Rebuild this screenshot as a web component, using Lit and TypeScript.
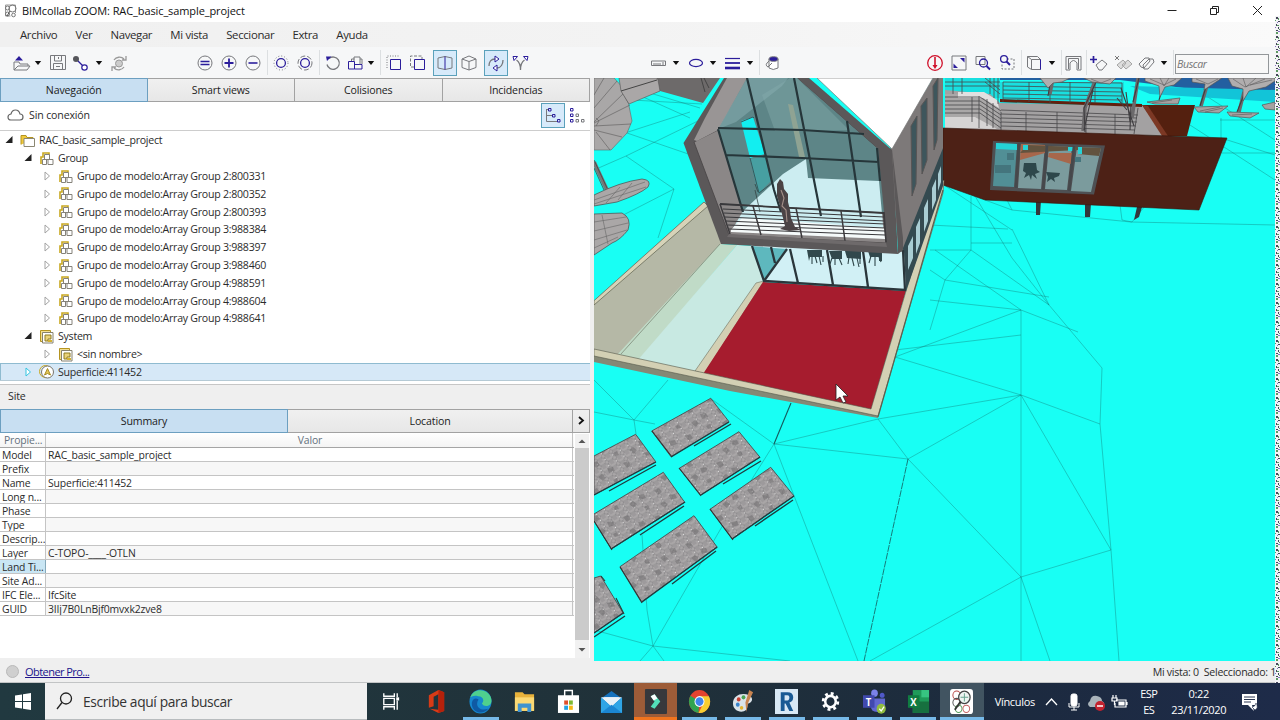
import { css, html, LitElement, svg } from 'lit'
import { customElement } from 'lit/decorators.js'
import { classMap } from 'lit/directives/class-map.js'

const G = '#77787c'
const B = '#2b1d9b'

// 24x24 toolbar glyphs
const icons: Record<string, unknown> = {
	open: svg`<path d="M5 19V11h5l1 2h8v2M5 19l4-4h12l-3 4z" stroke=${G}/><path d="M10 5l4 4.500H6z" fill=${B} />`,
	save: svg`<path d="M4.500 4.500h15v14h-15zM8.500 5v5h7V5M12.500 6v2M7.500 18v-5.500h9V18M10 15.500h4" stroke=${G}/>`,
	link: svg`<path d="M6 8l8 8" stroke=${B} stroke-width="1.2"/><circle cx="6" cy="8" r="3" fill="#55565b"/><circle cx="14.500" cy="16.500" r="2.700" fill="#fff" stroke=${B} stroke-width="1.200"/>`,
	refresh: svg`<circle cx="12" cy="12.500" r="3.500" fill="#ccc" stroke="#999"/><path d="M7 9c2-3 7-4 10-1M19 5v4h-4M17 16c-2 3-7 4-10 1M5 20v-4h4" stroke="#999" stroke-width="1.3"/>`,
	equal: svg`<circle cx="12" cy="12" r="7" stroke=${G}/><path d="M7.500 10.500h9M7.500 13.500h9" stroke=${B} stroke-width="1.600"/>`,
	plus: svg`<circle cx="12" cy="12" r="7" stroke=${G}/><path d="M7.500 12h9M12 7.500v9" stroke=${B} stroke-width="1.800"/>`,
	minus: svg`<circle cx="12" cy="12" r="7" stroke=${G}/><path d="M7.500 12h9" stroke=${B} stroke-width="1.600"/>`,
	dotted: svg`<circle cx="12" cy="12" r="7" stroke=${G} stroke-dasharray="1 2"/><circle cx="12" cy="12" r="4.400" stroke=${B} stroke-width="1.300"/>`,
	dashed: svg`<circle cx="12" cy="12" r="7" stroke=${G} stroke-dasharray="5 2"/><circle cx="12" cy="12" r="4.400" stroke=${B} stroke-width="1.300"/>`,
	undo: svg`<path d="M8 7.500a6.200 6.200 0 1 1-2 6" stroke=${G} stroke-width="1.300"/><path d="M5 5.500h5.500L6 10z" fill=${B} />`,
	cubes: svg`<path d="M5 10.500h6v7.500H5zM11 13.500h7.500V18H11" stroke=${B}/><path d="M8 10V8h3M10.500 6h6v7.500M10.500 6v4M16.500 8h2v5" stroke=${G}/>`,
	boxDots: svg`<path d="M5 17V5h13" stroke=${G} stroke-dasharray="1 1.500"/><path d="M8.500 8.500h10v10h-10z" stroke=${B}/>`,
	boxDash: svg`<path d="M8 16H4.500V5H16v3" stroke=${G} stroke-dasharray="3 1.500"/><path d="M8.500 8.500h10v10h-10z" stroke=${B}/>`,
	split: svg`<path d="M5 7l7-1.500L19 7v10l-7 1.500L5 17z" stroke=${G}/><path d="M12 5.500v13" stroke=${B}/>`,
	cube: svg`<path d="M12 5l7 3v8.500l-7 2.500-7-2.500V8zM5 8l7 2.500L19 8M12 10.500V19" stroke=${G}/>`,
	orbit: svg`<path d="M5 15c0-4 2-7 6-7M19 9c0 4-2 8-6 8" stroke=${G} stroke-width="1.3"/><path d="M11 5l4 3-4 3zM13 14l-4 3 4 3z" fill="#fff" stroke=${B}/>`,
	fork: svg`<path d="M12.500 19c0-5-1-8-4-10M12.500 19c0-5 1-8 4-10" stroke=${G} stroke-width="1.300"/><path d="M5 5.500h4.500L6 9.500zM20 5.500h-4.500l3.500 4z" fill="#fff" stroke=${B}/>`,
	ruler: svg`<path d="M4.500 10h14v4.500h-14zM7 14v-2M9 14v-2M11 14v-2M13 14v-2M16 14v-3" stroke=${G}/>`,
	ellipse: svg`<ellipse cx="12" cy="12" rx="6.500" ry="3.600" stroke=${B} stroke-width="1.200"/>`,
	lines: svg`<path d="M4 7.500h15" stroke=${B} stroke-width="1.200"/><path d="M4 12h15" stroke=${B} stroke-width="1.800"/><path d="M4 17h15" stroke=${B} stroke-width="2.600"/>`,
	bucket: svg`<path d="M8 8v9q4 3 9 0V8" stroke=${G} fill="#fff"/><ellipse cx="12.500" cy="8" rx="4.500" ry="2.300" fill=${B} stroke=${G}/><path d="M8 10q-5 4-1 6l4-4" stroke=${G}/>`,
	down: svg`<circle cx="12" cy="12" r="7.300" stroke="#d0112b" stroke-width="1.300"/><path d="M12 6v10" stroke="#d0112b" stroke-width="1.600"/><path d="M9.500 14h5L12 18z" fill="#d0112b"/>`,
	fit: svg`<path d="M5 5h14v14H5z" stroke=${G}/><path d="M13 7h4.500v4.500zM6.500 12.500V17H11z" fill=${B}/>`,
	zoom: svg`<path d="M5 5.500h9v8H5z" stroke=${G}/><circle cx="12.500" cy="12" r="4" stroke=${B} stroke-width="1.300"/><path d="M15.500 15l3.500 3.500" stroke=${B} stroke-width="1.900"/>`,
	zoomBox: svg`<path d="M12 8h7v10H7v-6" stroke=${G} stroke-dasharray="2 1.500"/><circle cx="9" cy="8" r="3.400" stroke=${B} stroke-width="1.300"/><path d="M11.500 10.500L15 14" stroke=${B} stroke-width="1.900"/>`,
	solid: svg`<path d="M8.500 8.500h9v10h-9zM4.500 5.500h10l3 3M4.500 5.500v10.500l4 2.500M4.500 5.500l4 3" stroke=${G}/><path d="M17.500 8.500v10" stroke=${B}/>`,
	gate: svg`<path d="M4.500 19V5.500h15V19h-4v-7q-3.500-5-7 0v7zM7 18V7.500h10V18" stroke=${G}/>`,
	addPlane: svg`<path d="M9 14l6-5 5 4-5 6h-3z" stroke=${G}/><path d="M6.500 5v7M3 8.500h7" stroke=${B} stroke-width="1.700"/>`,
	delPlane: svg`<path d="M6 14l6-5 3 3-5 6zM11 14l6-5 4 4-6 5z" stroke="#a5a5a5" fill="#ddd"/><path d="M4 5l4 4M8 5l-4 4" stroke="#777"/>`,
	planes: svg`<path d="M4 13l6-6h4l1 3-6 7-3-1zM8 14l6-6h4l1 3-6 7H9z" stroke=${G}/>`,
}

const tools = [
	'open caret save link caret refresh',
	'equal plus minus | dotted dashed | undo cubes~ caret | boxDots boxDash split* cube orbit* fork',
	'ruler caret ellipse caret lines caret | bucket',
	'down fit zoom zoomBox | solid caret | gate~ | addPlane delPlane planes caret |',
].map((g) => g.split(' '))

const menus = ['Archivo', 'Ver', 'Navegar', 'Mi vista', 'Seccionar', 'Extra', 'Ayuda']

const groups = ['2:800331', '2:800352', '2:800393', '3:988384', '3:988397', '3:988460', '4:988591', '4:988604', '4:988641']

const tree = [
	{ level: 0, icon: 'folder', label: 'RAC_basic_sample_project', open: true },
	{ level: 1, icon: 'group', label: 'Group', open: true },
	...groups.map((g) => ({ level: 2, icon: 'group', label: `Grupo de modelo:Array Group ${g}`, open: false })),
	{ level: 1, icon: 'system', label: 'System', open: true },
	{ level: 2, icon: 'system', label: '<sin nombre>', open: false },
	{ level: 1, icon: 'site', label: 'Superficie:411452', open: false, selected: true },
] as { level: number; icon: string; label: string; open: boolean; selected?: boolean }[]

const treeIcons: Record<string, unknown> = {
	folder: svg`<path d="M1 11.500V2.500h5l1 2h6v3" fill="#efc93c" stroke="#b59420"/><path d="M4 5.500h10.500v8H4z" fill="#fff" stroke="#8b8773"/>`,
	group: svg`<path d="M2 13V6h2V2h6v3" stroke="#c9a820" stroke-width="1.600"/><path d="M5.500 3.500h5v5h-5zM3.500 8.500h4v5h-4zM9 8.500h5v5H9z" fill="#fff" stroke="#85827a"/>`,
	system: svg`<path d="M1.500 1.500h10v11h-10z" fill="#f3df92" stroke="#b59420"/><path d="M3.500 3.500h10.500v10.500H3.500z" fill="#fff" stroke="#85816f"/><path d="M6 6h6v4H9v2H6z" fill="#e9d27a" stroke="#8f7a20"/><path d="M9 11h4v2H9z" fill="#d3b233"/>`,
	site: svg`<circle cx="6.500" cy="7.500" r="6" stroke="#c9a820"/><circle cx="8.500" cy="8" r="6" fill="#fff" stroke="#77746c"/><path d="M5.500 11l3-6.500 3 6.500-3-1.500z" fill="#e4c75a" stroke="#a78c24"/>`,
}

const properties = [
	['Model', 'RAC_basic_sample_project'],
	['Prefix', ''],
	['Name', 'Superficie:411452'],
	['Long n...', ''],
	['Phase', ''],
	['Type', ''],
	['Descrip...', ''],
	['Layer', 'C-TOPO-____-OTLN'],
	['Land Ti...', ''],
	['Site Ad...', ''],
	['IFC Ele...', 'IfcSite'],
	['GUID', '3IIj7B0LnBjf0mvxk2zve8'],
]

const pavers = [
	'710.7,398.3 729,421.7 671,456.7 651.7,431',
	'739,431.7 760,457.3 700.7,495 679.3,468.3',
	'770.7,467.3 794,496 732.3,539 710,509.3',
	'635.7,434.3 655.7,461.7 594,495 594,456',
	'663.3,472.3 684.7,502.3 611.3,549 594,521 594,514',
	'694,515.7 717.3,547.3 641.7,601.7 620,566.7',
	'600.7,576 623.3,613.3 594,633 594,578',
]

@customElement('model-view')
export class ModelView extends LitElement {
	static styles = css`
		:host {
			display: block;
			overflow: hidden;
		}

		svg {
			display: block;
			width: 100%;
			height: 100%;
		}
	`

	terrain() {
		return svg`
			<g stroke="#146a68" stroke-opacity=".6" stroke-width=".6" fill="none">
				<path d="M625 133L690 112M627 133L700 158M594 170L626 156L674 189L594 230M674 189L658 238M626 156L700 120M632 100L702 104M632 92L690 118M650 93L700 108"/>
				<path d="M594 380L634 420L668 380M594 412L634 420L636 434M710 398L774 444M634 420L655 424M642 535L647 610L653 646M653 646L594 630M653 646L640 661M653 646L664 661M653 646L790 661M653 646L720 530L774 444"/>
				<path d="M774 444L878 419L1021 395L1100 424L1111 550L1119 661M774 444L908 459L1021 395M878 419L908 459L1021 577L1111 550L1021 395M774 444L858 661M1021 395V661M1021 577L870 661M1021 577L1050 661M1021 310V395L895 357L1021 310"/>
				<path d="M944 180L975 196L1012 258L1049 305L1102 368L1100 424M1012 229L1049 305M1021 310L1078 332M895 350L1021 335M935 250L1021 310M930 300L1021 310M930 225L1008 229M944 185L1012 230M971 196V250H930M971 243H1012M930 270L945 280L971 250L1049 305M945 280L1049 297M945 280L930 330"/>
				<path d="M985 200L1012 210L1131 222L1275 225M1012 210L1005 196M1120 205L1122 220L1132 222L1145 206M1221 118V138L1275 155M1190 125L1275 180M1200 92L1275 140M1220 120H1275M1222 153H1275"/>
			</g>
			<path d="M791 403L774 444" stroke="#145a5c" stroke-width="1.100" fill="none"/>
			<path d="M908 459L864 661" stroke="#145a5c" stroke-width=".8" stroke-dasharray="7 1" fill="none"/>`
	}

	trees() {
		return svg`
			<path d="M594 78H614L626 91L632 121L627 133L611 150H594z" fill="#a9a7a7" stroke="#666" stroke-width=".6"/>
			<path d="M594 108L617 81M594 122L625 92M594 123L630 105M594 126L631 124M594 130L622 137M596 132L610 150M594 95L604 78M596 118l3 3-3 5" stroke="#5c5a5a" stroke-width=".6" fill="none"/>
			<path d="M594 162l13 28" stroke="#777" stroke-width="4"/>
			<path d="M594 160l13 28M594 168l10 22" stroke="#444" stroke-width=".8"/>
			<path d="M594 195Q620 182 642 179Q652 180 648 187Q640 194 617 202L594 206zM594 214L622 213Q632 218 628 230Q620 240 612 243L594 255z" fill="#aaa7a7" stroke="#4c4a4a" stroke-width=".7"/>
			<path d="M594 200L645 182M594 204L646 187M606 203L620 187M618 200L632 183M594 222L626 217M594 231L628 223M594 240L627 230M594 248L618 237M602 215L608 244" stroke="#666" stroke-width=".6"/>`
	}

	annex() {
		return svg`
			<path d="M945 78H1275V94L1200 90L1120 80H945z" fill="#235fa0"/>
			<path d="M1130 86L1275 90V102L1150 94z" fill="#12c4d8"/>
			<path d="M945 78H1000V82H1124V104H1000V98H945z" fill="#19dfe0"/>
			<path d="M945 90L990 94L1000 103L1143 106L1165 136L945 130z" fill="#a3a1a2"/>
			<path d="M945 94L985 94L998 103V128L945 128z" fill="#aaa8a8"/>
			<path d="M945 117H975L997 129L945 128z" fill="#d6d4d4"/>
			<path d="M958 92h26l13 8 2 8-16-10h-25z" fill="#e2e0e0"/>
			<path d="M1142 105L1195 105L1187 136L1165 136z" fill="#54200f"/>
			<path d="M1142 105L1148 106L1168 136L1162 136z" fill="#7c3824"/>
			<path d="M1000 99L1142 104V107L1000 102z" fill="#62200f"/>
			<g stroke="#474649" stroke-width=".8" fill="none">
				<path d="M1003 82L1122 83M1003 86L1122 88M1003 90L1122 92M1003 94L1122 96M1003 98L1122 100M1003 82V102M1029 82V102M1050 82V103M1070 82V103M1095 82V103M1122 83V104"/>
				<path d="M1001 110L1138 115M1001 114L1137 118M1001 118L1137 122M1001 122L1136 126M1001 126L1135 130M1001 112V130M1026 112V131M1057 112V132M1086 113V133M1115 114V134M1138 108L1134 134"/>
				<path d="M945 97H980L1001 111M945 101H980L1001 115M945 105H980L1001 119M945 109H980L1001 123M945 113H980L1001 128M979 96V128M972 97V122M987 99V126M993 103V128M962 78V94M953 78V94M998 78V104M945 82H1000M945 86H1000M985 78l15 12M985 82l15 12M990 78v16M994 78v20"/>
			</g>
			<g stroke="#6b696b" fill="none" stroke-width="3.500">
				<path d="M1053 78L1050 94M1096 78L1085 108L1083 131M1138 78L1132 118M1208 82L1201 106M1244 92L1239 112"/>
			</g>
			<path d="M1051 78l-3 18M1096 82l-12 26 1 24M1093 90l-9 40M1139 78l-6 24M1121 88l13 38M1126 92l4 30M1117 98l10 12M1131 104l-1 26M1207 84l-7 22M1245 92l-8 20M1164 84l-5 16" stroke="#3f3d40" stroke-width="1.100" fill="none"/>
			<path d="M1040 78h30l-8 4-9 1-5 5zM1084 78h32l-6 6-18-2zM1145 78h37l-8 7-9 2-5 10-1-11-14-5zM1192 78h30l-12 8-6 4 1-6-13-2zM1228 78h47v3l-9 6-17 4-6 10 0-12-11-3z" fill="#b0adae" stroke="#555" stroke-width=".7"/>
			<path d="M1150 79l14 6 12-6M1160 78l4 8 5-8M1196 79l12 5 10-5M1233 79l12 8 20-8M1243 78l3 9 10-9M1250 85l22-5M1091 79l10 4 10-4" stroke="#5c5a5c" stroke-width=".6" fill="none"/>
			<path d="M1147 102L1180 98L1178 104L1155 104zM1194 107L1228 106L1219 113L1198 112zM1227 112L1259 113L1250 118L1230 116zM1262 105L1275 102V110L1265 109z" fill="#a5a2a2" stroke="#555" stroke-width=".7"/>
			<path d="M1152 103l20-3M1200 111l20-4M1205 112l18-4M1232 115l20-1" stroke="#555" stroke-width=".6"/>
			<path d="M1036 200h5l-1 15h-4zM1085 203h6l-1 14h-5zM1137 207h5l-3 10-5 3z" fill="#33383b"/>
			<path d="M943 128L1227 138L1199 210L985 200L943 185z" fill="#4d2116" stroke="#35150e" stroke-width=".6"/>
			<path d="M993 141L1105 145.500L1094 194.500L990 190z" fill="#4e5053"/>
			<path d="M996 143L1017 144L1014 187L993 186z" fill="#518f96"/>
			<path d="M996 143L1017 144V150L996 149z" fill="#25d3d6"/>
			<path d="M1021 144L1045 145L1041 189L1018 188zM1049 146L1072 147L1067 190L1045 189zM1077 147L1101 148L1091 192L1071 191z" fill="#7b9b9d"/>
			<path d="M1021 144L1045 145V153L1020 160zM1049 153L1072 153L1071 164L1048 157z" fill="#a7674b"/>
			<path d="M1027 145L1101 148L1099 156L1078 154V150L1020 153z" fill="#62533f"/>
			<path d="M1023 145h5v5h-5zM1068 147h5v4h-5zM1078 147h4v7h-4z" fill="#25d3d6"/>
			<path d="M1007 153h7v7h-7zM995 165h16v8h-16zM1075 157h6v5h-6z" fill="#44757d"/>
			<path d="M1024 163h12l1 7 3 2-5 2 2 5-5-4-1 5-2-5-5 3 2-5-3-2zM1046 172l14 1-1 3-5 2 1 4-4-3-4 3 1-5z" fill="#2e474b"/>
			<path d="M1047 145.500L1043 190M1019 143L1016 188M1074 146L1069 191" stroke="#46484b" stroke-width="2.600"/>`
	}

	yard() {
		return svg`
			<path d="M594 300.700L704 202L712 206L722 244L622 358L594 352z" fill="#b5b8a6"/>
			<path d="M594 300.700L704 202L708 206L594 305z" fill="#d6d3b8" stroke="#5c604f" stroke-width=".7"/>
			<path d="M720 244L737 245L639 361L616 356z" fill="#c0dbc7"/>
			<path d="M737 245L752 246L763 281L698 374L637 361z" fill="#c8e9e2"/>
			<path d="M720 244L621 354" stroke="#75806f" stroke-width=".7"/>
			<path d="M756 283L764 281L704 374L695 371z" fill="#d3d0b4" stroke="#6f705f" stroke-width=".6"/>
			<path d="M763 282L906 291L871 411L703 374z" fill="#a61c2e"/>
			<path d="M594 355L878 414V418L730 391L594 362z" fill="#858875"/>
			<path d="M594 349L871 409L906 291L940 184L944 180L943 193L878 416L594 356z" fill="#d3d0b4" stroke="#54584a" stroke-width=".6"/>
			<path d="M943 190L878 417" stroke="#5d604f" stroke-width="1.200"/>`
	}

	house() {
		return svg`
			<path d="M620 78H720L703 103L660 91L628 103L621 91z" fill="#6d6a6a"/>
			<path d="M619 78H657L658 80L660 91L629 104L621 91z" fill="#aaa7a7" stroke="#555" stroke-width=".6"/>
			<path d="M621 91L657 80M701 78l4 14M704 78l5 10" stroke="#444"/>
			<path d="M890 149L933 78H943V183L905 291L898 246z" fill="#7d7979"/>
			<path d="M903 248L943 148V186L906 291z" fill="#344a50"/>
			<path d="M908 246l5-10v22l-5 12zM916 227l4-9v25l-4 11zM924 208l4-9v22l-4 11zM932 188l4-9v21l-4 10zM938 174l3-8v16l-3 9z" fill="#a9cdd3"/>
			<path d="M911 126L917 116L916 184L912 196zM921 106L927 98V160L922 174zM933 86L938 78L937 140L934 150z" fill="#3e565c" stroke="#585555"/>
			<path d="M751 245L904 252L906 290L763 281z" fill="#d1f0f5"/>
			<path d="M752 246L786 249L763 281z" fill="#5eb8be"/>
			<path d="M752 246L764 281L905 290L903 250M764 281L787 249M771 247L775 263M790 249L798 283M827 250L833 285M863 251L868 287" fill="none" stroke="#2a363b" stroke-width="2.300"/>
			<path d="M807 250h15v7h-12l-1 4zM829 251h13v8h-10zM845 251h16v8l-14-1zM868 251h14v10h-3v-4h-9z" fill="#31484c"/>
			<path d="M812 256v8M815 256l2 7M819 256l2 9M823 256v6M832 258l-2 6M835 258v7M839 258l3 7M849 257l-1 7M852 258l2 8M857 258l2 9M860 256v8M871 256l-2 7M875 257v9M879 257l2 5" stroke="#31484c" stroke-width="1.100"/>
			<path d="M724 78H809L892 150L898 254L721 244L683.500 143z" fill="#5b5859"/>
			<path d="M892 149L898 246L898 254L903 250V238z" fill="#5b5859"/>
			<path d="M817 78H933L892 149z" fill="#fff" stroke="#777" stroke-width=".7"/>
			<path d="M741 78H797L877 148L886 243L729 235L694 142L718 130z" fill="#8b8787" stroke="#464344" stroke-width=".8"/>
			<path d="M727 78H747L718 130L697 141L694 140L705 118z" fill="#999595"/>
			<path d="M747 78H797L878 149L884 212L743 211L718 130z" fill="#5d8587"/>
			<path d="M762 95L790 78H797L849 130L775 131z" fill="#769c9e" opacity=".7"/>
			<path d="M747 78H788L782 86L736 122L718 129z" fill="#83aaad" opacity=".6"/>
			<path d="M741 121L753 117L765 154L750 158z" fill="#12eef0"/>
			<path d="M750 159L765 156L771 181L758 194z" fill="#479fa1"/>
			<path d="M741 122l12-5 1 1M750 158l9 35 13-10" stroke="#35595d" fill="none"/>
			<path d="M788 104l5 1 12 52h-6z" fill="#8fa393"/>
			<path d="M806 159L808 178L879 181L884 236L732 230L743 211L783 174z" fill="#ccedf1"/>
			<path d="M731 230L742 218L884 228L885 239L731 232z" fill="#f5fafa"/>
			<path d="M747 78L774 190L781 212M794 78L821 216M847 121L861 217M718 129L743 212M718 128L802 130L864 134M726 155L802 158L879 162M877 148L880 181" fill="none" stroke="#26363a" stroke-width="2.200"/>
			<path d="M720 204L884 213M723 209L884 217M724 213L885 221M725 217L885 224M726 221L885 228M728 225L885 231M729 229L885 235" fill="none" stroke="#38383b" stroke-width="1"/>
			<path d="M720 204L884 213" stroke="#38383b" stroke-width="1.800"/>
			<path d="M753 206L761 235M796 208L802 238M841 211L845 241M720 204L730 234M884 212L886 242" stroke="#3c3a3d" stroke-width="1.500"/>
			<path d="M777 184l3-5 3 3 1 7 4 5v8l2 8 1 8 4 9 6 3-12 1-9-2 5-3-5-20-3-10z" fill="#4b4345"/>
			<path d="M781 190l3 8-2 8 4 4 1 12" stroke="#a38f88" fill="none" stroke-width="1.100"/>
			<path d="M729 234L886 243L887 247L727 237z" fill="#6e6a6b"/>
			<path d="M755 190l5 22M755 184l3 8" stroke="#344" stroke-width=".8"/>`
	}

	render() {
		return html`
			<svg viewBox="594 78 681 583" preserveAspectRatio="none" fill="none">
				<defs>
					<pattern id="stone" width="9" height="7" patternUnits="userSpaceOnUse" patternTransform="rotate(-32)">
						<rect width="9" height="7" fill="#a9a6a7" />
						<rect x="2" y="1" width="4" height="3" fill="#9d9a9c" />
						<path d="M0 2l2-2h4l3 2v2L6 7H2L0 4z" stroke="#7c7a7d" stroke-width=".6" />
						<path d="M8 3h1v1H8z" fill="#e2e2e2" />
					</pattern>
					<pattern id="stains" width="31" height="27" patternUnits="userSpaceOnUse">
						<path d="M3 4l5-2 3 4-4 3zM18 9l6-1 2 4-6 2zM9 18l4-3 4 3-3 4zM24 21l4-2 2 4-4 1z" fill="#69676a" fill-opacity=".5" />
					</pattern>
				</defs>
				<rect x="594" y="78" width="681" height="583" fill="#18fff4" />
				${this.terrain()} ${this.trees()} ${this.annex()} ${this.yard()} ${this.house()}
				${pavers.map(
					(p) => svg`
						<polygon points=${p} fill="url(#stone)" stroke="#4a4a4c" stroke-width=".9"/>
						<polygon points=${p} fill="url(#stains)"/>`
				)}
				<path
					d="M729 422L671 457M731 424L694 446M760 457L701 495M761 461L723 484M794 496L732 539M793 500L755 526M656 462L594 495M656 465L609 491M685 502L611 549M684 506L640 535M717 547L642 602M716 551L672 584M623 613L594 633M625 616L594 637"
					stroke="#1f3d40"
					stroke-width="1.4"
				/>
				<path d="M652 431l20 26M679 468l22 28M710 509l23 31M594 521l18 29M620 567l22 36M601 576l4 5M616 598l8 16" stroke="#333" stroke-width="1.1" />
				<path d="M836 384v16l4-3 3 6 3-1-3-6h5z" fill="#fff" stroke="#222" stroke-width=".8" />
			</svg>
		`
	}
}

@customElement('task-bar')
export class TaskBar extends LitElement {
	static styles = css`
		:host {
			display: flex;
			height: 37px;
			color: #fff;
			background: linear-gradient(90deg, #213940, #203139 50%, #1c2a3f 80%, #1e2b49);
			font: 11px 'Open Sans', 'Noto Sans', sans-serif;
		}

		.start {
			width: 45px;
			display: grid;
			place-items: center;
		}

		.search {
			width: 322px;
			margin-right: 1px;
			box-sizing: border-box;
			display: flex;
			align-items: center;
			gap: 10px;
			padding-left: 11px;
			background: #f0f0f0;
			border-bottom: 1px solid #b8bcbe;
			color: #333;
			font-size: 13.8px;
			letter-spacing: -0.36px;
		}

		.task {
			width: 43.75px;
			display: grid;
			place-items: center;
			position: relative;
		}

		.task.first {
			width: 47px;
		}

		.task.first svg {
			margin-right: 3px;
		}

		.task.running::after {
			content: '';
			position: absolute;
			left: 4px;
			right: 4px;
			bottom: 0;
			height: 3px;
			background: #76b9e8;
		}

		.task.alert {
			background: #9d5c38;
			width: 42.75px;
			margin-right: 1px;
		}

		.task.alert::after {
			left: 0;
			right: 0;
			background: #f0741e;
		}

		.task.current {
			background: #415461;
		}

		.task.current::after {
			left: 0;
			right: 0;
		}

		.tray {
			flex: 1;
			display: flex;
			align-items: center;
			padding-left: 11px;
			letter-spacing: -0.32px;
		}

		.links {
			width: 47px;
		}

		.tray svg {
			margin-right: 2px;
		}

		.stack {
			text-align: center;
			line-height: 16px;
			width: 34px;
			letter-spacing: -0.6px;
		}

		.clock {
			width: 66px;
			letter-spacing: -0.35px;
		}

		.note {
			margin-left: 8px;
		}
	`

	apps: [string, unknown][] = [
		['first', svg`<path d="M5 4v3h11V4M5 20v-3h11v3M5 9h11v6H5zM19 4v4M19 11v9" stroke="#fff" stroke-width="1.400"/><path d="M18 8h3v3h-3z" fill="#fff"/>`],
		['', svg`<path d="M4 6l10-5 6 2v18l-6 2-9-4 9 1V5L9 7.500v9L4 18z" fill="#d83b17"/><path d="M14 1l6 2v18l-6 2z" fill="#b5210b"/>`],
		['running', svg`<circle cx="12" cy="12" r="11.500" fill="#1688cf"/><path d="M1.500 8C5-3 23 0 23.500 11c0 6-8 7-10 3 3-3 1-7-4-7-4-1-6 0-8 1z" fill="#4fd08e"/><path d="M10 10c-4 5 0 12 10 9-6 7-18 3-17-6 1-4 4-5 7-3z" fill="#0f5aa4"/>`],
		['', svg`<path d="M2 3h8l2 2h10v16H2z" fill="#e8b23b"/><path d="M2 8h20v13H2z" fill="#fbd974"/><path d="M5 22v-8h14v8h-4v-4H9v4z" fill="#3f93cf"/>`],
		['', svg`<path d="M8 7V1.500h8V7" stroke="#fff" stroke-width="1.500"/><path d="M1 6h22v17H1z" fill="#fff"/><path d="M7.500 11h4v4h-4z" fill="#e0502b"/><path d="M12.500 11h4v4h-4z" fill="#7fba32"/><path d="M7.500 16h4v4h-4z" fill="#22a2e4"/><path d="M12.500 16h4v4h-4z" fill="#f5b916"/>`],
		['', svg`<path d="M1 9L12 2l11 7v14H1z" fill="#1471bd"/><path d="M4 8h16l-8 9z" fill="#f3f6f8"/><path d="M1 8h22L12 17z" fill="#e8f1f7"/><path d="M1 8l11 9 11-9v15H1z" fill="#2fa5e6"/><path d="M1 23l11-8 11 8z" fill="#1b86d2"/>`],
		['running alert', svg`<rect x="1" y="0" width="23" height="24" rx="1" fill="#36383c"/><path d="M7 7l4-2 6 7-6 7-4-2 4-5z" fill="#53dfb9"/><path d="M7 7l4-2 3 4-4 2z" fill="#fff"/>`],
		['running', svg`<circle cx="12" cy="12" r="11" fill="#e5432f"/><path d="M12 12L2.500 6.500A11 11 0 0 0 11 23z" fill="#31a350"/><path d="M12 7h9.800a11 11 0 0 1-10.800 16l5-9z" fill="#f8cd31"/><circle cx="12" cy="12" r="5.200" fill="#fff"/><circle cx="12" cy="12" r="4.200" fill="#4084ec"/>`],
		['running', svg`<path d="M1 14C1 6 10 3 18 6c5 3 3 7-1 8-2 1 0 3-2 6-5 4-14 1-14-6z" fill="#dbe3e8"/><circle cx="7" cy="10" r="2" fill="#c84032"/><circle cx="12" cy="8" r="2" fill="#4aa453"/><circle cx="6" cy="15" r="2" fill="#3a84cb"/><circle cx="10" cy="18" r="1.800" fill="#e4b32e"/><path d="M18 1l4 2-5 10-2 9-1-9z" fill="#c88450"/>`],
		['running', svg`<rect x="0" y="0" width="24" height="24" fill="#d8e8f5"/><path d="M6 21V3h7q6 0 6 5 0 4-4 5l4 8h-4l-4-7h-1v7zM10 6v5h3q2 0 2-3 0-2-2-2z" fill="#195a94"/>`],
		['running', svg`<circle cx="12" cy="12" r="5.500" stroke="#fff" stroke-width="2.600"/><circle cx="12" cy="12" r="7.700" stroke="#fff" stroke-width="2.800" stroke-dasharray="3 3.050"/>`],
		['running', svg`<circle cx="12" cy="4" r="3.500" fill="#7b82ea"/><circle cx="20" cy="6" r="2.500" fill="#5059c9"/><path d="M8 9h15v8q-2 5-8 5-7 0-7-6z" fill="#6068d0"/><rect x="0" y="6" width="12" height="12" fill="#4149ae"/><text x="3" y="16" font-size="10" font-weight="700" fill="#fff">T</text><circle cx="19" cy="19" r="4.800" fill="#91bd40"/><path d="M17 19l2 2 3-4" stroke="#fff" stroke-width="1.300"/>`],
		['running', svg`<path d="M6 1h17v22H6z" fill="#1f9b5a"/><path d="M15 1h8v7h-8z" fill="#37c481"/><path d="M6 12h17v11H6z" fill="#17703f"/><rect x="1" y="6" width="12" height="12" fill="#107c41"/><text x="3.500" y="16" font-size="10" font-weight="700" fill="#fff">X</text>`],
		['running current', svg`<rect x="0" y="0" width="24" height="24" rx="3" fill="#fff"/><circle cx="7" cy="6" r="4" stroke="#b94745"/><circle cx="7" cy="13" r="4" stroke="#555"/><circle cx="9" cy="19" r="3.500" stroke="#5aa05f"/><circle cx="17" cy="19" r="3.500" stroke="#c56565"/><circle cx="15" cy="8" r="6" fill="#eef5f2" stroke="#444" stroke-width="1.300"/><path d="M11 12l-6 8" stroke="#333" stroke-width="1.800"/><path d="M11 8h8M15 4v8" stroke="#67a38f"/>`],
	]

	render() {
		return html`
			<div class="start">
				<svg width="16" height="17" viewBox="0 0 16 17" fill="#fff"><path d="M0 2.500l7-1V8H0zM8 1.300L16 0v8H8zM0 9h7v6.500l-7-1zM8 9h8v8l-8-1.300z" /></svg>
			</div>
			<div class="search">
				<svg width="17" height="18" viewBox="0 0 17 18" fill="none" stroke="#222" stroke-width="1.3"><circle cx="10" cy="6.500" r="5.500" /><path d="M6 10.500L1 17" /></svg>
				<span>Escribe aquí para buscar</span>
			</div>
			${this.apps.map(([cls, icon]) => html`<div class="task ${cls}"><svg width="23" height="25" viewBox="0 0 24 24" fill="none" preserveAspectRatio="none">${icon}</svg></div>`)}
			<div class="tray">
				<span class="links">Vínculos</span>
				<svg width="20" height="20" viewBox="0 0 20 20" fill="none" stroke="#fff" stroke-width="1.300"><path d="M4 13l5.500-6 5.500 6" /></svg>
				<svg width="20" height="22" viewBox="0 0 20 22" fill="none" stroke="#fff"><rect x="7" y="3" width="6" height="12" rx="2" fill="#fff" /><path d="M5 12v4h10v-4M10 16v3M7 19h6" /></svg>
				<svg width="22" height="22" viewBox="0 0 22 22"><path d="M4 16q-4-3 0-6 1-6 7-5 5 1 5 5 4 2 1 6z" fill="#a9b3ba" /><circle cx="14" cy="15" r="5" fill="#c3222f" /><path d="M11 15h6" stroke="#fff" stroke-width="1.500" /></svg>
				<svg width="20" height="20" viewBox="0 0 20 20" fill="none" stroke="#fff" stroke-width="1.200"><path d="M6 8h10v7H5v-4M17 10v3M3 3v3M6 3v3M2 6h5v3H2zM4.500 9v4" /><path d="M9 10h5v3H9z" fill="#fff" /></svg>
				<div class="stack">ESP<br />ES</div>
				<div class="stack clock">0:22<br />23/11/2020</div>
				<svg class="note" width="20" height="20" viewBox="0 0 20 20"><path d="M2 2h15v11h-5l2 6-6-6H2z" fill="#fff" /><path d="M4 5h11M4 7.500h11M4 10h7" stroke="#2a3550" /><path d="M12 15q4-1 4-4 3 5-1 7z" fill="#fff" stroke="#2a3550" stroke-width=".6" /></svg>
			</div>
		`
	}
}

@customElement('app-root')
export class AppRoot extends LitElement {
	static styles = css`
		:host {
			display: flex;
			flex-direction: column;
			width: 1280px;
			height: 720px;
			overflow: hidden;
			position: relative;
			background: #efefef;
			color: #2b2b2b;
			font: 10.6px/14px 'Open Sans', 'Noto Sans', sans-serif;
			letter-spacing: -0.15px;
		}

		.title {
			height: 22px;
			display: flex;
			align-items: center;
			background: #fff;
			padding-left: 4px;
			color: #111;
			font-size: 11px;
			letter-spacing: -0.1px;
		}

		.title span {
			flex: 1;
			padding-left: 5px;
		}

		.title .controls {
			width: 120px;
		}

		.menu {
			height: 25px;
			display: flex;
			align-items: center;
			gap: 18.2px;
			padding-left: 20px;
			font-size: 11.4px;
			letter-spacing: -0.35px;
			background: linear-gradient(90deg, #f0f0f0, #f3f3f3 50%, #fafafa);
		}

		.toolbar {
			height: 31px;
			display: grid;
			grid-template-columns: 184px 454px 276px 252px 94px;
			align-items: center;
			padding-left: 9px;
			background: #f6f7f8;
		}

		.group {
			display: flex;
			align-items: center;
			height: 31px;
		}

		.group svg {
			flex: none;
		}

		.tool {
			width: 24px;
			height: 24px;
		}

		.tool.narrow {
			width: 21px;
		}

		.tool.active {
			height: 26px;
			background: #d7eafa;
			outline: 1px solid #5ba1bb;
			outline-offset: -1px;
			margin: 0 0 0 3px;
		}

		.caret {
			width: 10px;
			height: 6px;
			margin-right: 3px;
		}

		.sep {
			width: 1px;
			height: 25px;
			margin: 0 1px 0 2px;
			background: #dcdfe1;
		}

		.caret + .sep {
			margin-left: 1px;
		}

		.find {
			height: 20px;
			box-sizing: border-box;
			border: 1px solid #93979a;
			background: #f8f8f8;
			padding: 2px 1px;
			font-style: italic;
			color: #747474;
			margin-top: 2px;
			letter-spacing: -0.4px;
		}

		.main {
			height: 583px;
			display: flex;
		}

		.side {
			width: 590px;
			margin-right: 4px;
			display: flex;
			flex-direction: column;
		}

		model-view {
			width: 681px;
			height: 583px;
		}

		.tabs {
			display: grid;
			grid-template-columns: repeat(4, 1fr);
			height: 24px;
			flex: none;
			text-align: center;
			line-height: 22px;
			color: #1c1c1c;
		}

		.tabs.props {
			grid-template-columns: 288px 285px 17px;
		}

		.tab {
			border: 1px solid #a2a2a2;
			border-left-width: 0;
			background: linear-gradient(#f0f0f0, #e7e7e7);
		}

		.tab.active {
			background: #c8dff2;
			border: 1px solid #6c9fc0;
		}

		.tab.more {
			display: grid;
			place-items: center;
		}

		.connection {
			height: 28px;
			display: flex;
			align-items: center;
			background: #fff;
			border-bottom: 1px solid #cdcdcd;
			padding: 0 1px 2px 7px;
			box-sizing: content-box;
			flex: none;
			height: 26px;
		}

		.connection span {
			flex: 1;
			padding-left: 5px;
		}

		.mode {
			width: 24px;
			height: 25px;
		}

		.mode.active {
			background: #d7eafa;
			outline: 1px solid #5ba1bb;
			outline-offset: -1px;
		}

		.tree {
			height: 252px;
			background: #fff;
			border-bottom: 1px solid #c6c6c6;
			padding-top: 0.6px;
			flex: none;
			letter-spacing: -0.26px;
		}

		.node {
			height: 17.8px;
			box-sizing: border-box;
			display: flex;
			align-items: center;
			padding-left: 2px;
		}

		.node.level1 {
			padding-left: 21px;
		}

		.node.level2 {
			padding-left: 40px;
		}

		.node.selected {
			background: #d6e8f7;
			box-shadow: inset 0 1px #8fbbd0, inset 0 -1px #b5cad5, inset 1px 0 #8fbbd0;
		}

		.arrow {
			width: 14px;
			height: 12px;
			margin-right: 4px;
		}

		.node .kind {
			width: 15px;
			height: 15px;
			margin-right: 4px;
		}

		.site {
			height: 24px;
			line-height: 22px;
			padding-left: 8px;
			flex: none;
		}

		.sheet {
			display: flex;
			height: 225px;
			background: #fff;
		}

		.table {
			width: 574px;
		}

		.row {
			display: grid;
			grid-template-columns: 46px 527px;
			height: 14.06px;
			box-sizing: border-box;
			border-bottom: 1px solid #c4c4c4;
			line-height: 14px;
			font-size: 10.4px;
		}

		.row > div {
			border-right: 1px solid #c4c4c4;
			padding-left: 2px;
			white-space: nowrap;
			overflow: hidden;
		}

		.row:nth-child(odd) {
			background: #f7f7f7;
		}

		.row:nth-child(odd) > div:first-child {
			background: #fff;
		}

		.row.head {
			height: 15px;
			background: linear-gradient(#fff, #f4f4f4);
			color: #63707c;
			border-bottom-color: #a5a5a5;
			line-height: 15px;
		}

		.row.head > div:first-child {
			padding-left: 4px;
			background: none;
		}

		.row.head > div:last-child {
			text-align: center;
		}

		.row.picked > div:first-child {
			background: #c9e6f4;
			border-color: #86a9ba;
		}

		.scroll {
			width: 14px;
			margin: 1px 1px 0;
			background: #f1f1f1;
			display: flex;
			flex-direction: column;
			align-items: center;
			justify-content: space-between;
		}

		.thumb {
			width: 14px;
			height: 192px;
			background: #cbcbcb;
		}

		.status {
			height: 22px;
			display: flex;
			align-items: center;
			padding-left: 6px;
			border-bottom: 1px solid #c2c4c5;
			box-sizing: border-box;
		}

		.lamp {
			width: 11px;
			height: 11px;
			border-radius: 50%;
			border: 1px solid #b9b9b9;
			background: #cfcfcf;
		}

		.status a {
			margin-left: 6px;
			color: #20148c;
			text-decoration: underline;
			letter-spacing: -0.55px;
			flex: 1;
			font-size: 11px;
		}

		.status .count {
			white-space: nowrap;
			letter-spacing: -0.28px;
			margin-right: 4px;
		}

		.static {
			position: absolute;
			right: 0;
			top: 16px;
		}
	`

	tool(name: string) {
		if (name === '|') return html`<div class="sep"></div>`
		if (name === 'caret') return html`<svg class="caret" viewBox="0 0 10 6"><path d="M1.800 1h6.400L5 5z" fill="#111" /></svg>`
		const key = name.replace(/[*~]/, '')
		const classes = { tool: true, active: name.endsWith('*'), narrow: name.endsWith('~') }
		return html`<svg class=${classMap(classes)} viewBox="0 0 24 24" fill="none" preserveAspectRatio=${classes.narrow ? 'xMidYMid slice' : 'xMidYMid meet'}>${icons[key]}</svg>`
	}

	node(n: (typeof tree)[number]) {
		const arrow = n.open
			? svg`<path d="M10.500 2v7H3.500z" fill="#222"/>`
			: svg`<path d="M5 2v8l4.500-4z" fill="#fff" stroke=${n.selected ? '#35c5e0' : '#a3a3a3'}/>`
		return html`
			<div class="node level${n.level} ${n.selected ? 'selected' : ''}">
				<svg class="arrow" viewBox="0 0 14 12">${arrow}</svg>
				<svg class="kind" viewBox="0 0 15 15" fill="none">${treeIcons[n.icon]}</svg>
				<span>${n.label}</span>
			</div>
		`
	}

	render() {
		return html`
			<div class="title">
				<svg width="13" height="14" viewBox="0 0 13 14" fill="none" stroke="#777"><path d="M1.500 1h10v8M1.500 1v11h5" stroke="#999" /><circle cx="3.500" cy="4" r="2" /><circle cx="3.500" cy="10" r="2" /><circle cx="9.500" cy="11" r="1.800" /><circle cx="8.500" cy="4.500" r="3.500" /><path d="M6 7l-3 5" stroke="#555" /></svg>
				<span>BIMcollab ZOOM: RAC_basic_sample_project</span>
				<svg class="controls" height="20" viewBox="0 0 120 20" fill="none" stroke="#222"><path d="M7.500 9.500h9M50.500 7.500h6v6h-6zM52.500 7V5.500h6v6H57M93 5l9 9M102 5l-9 9" /></svg>
			</div>
			<div class="menu">${menus.map((m) => html`<span>${m}</span>`)}</div>
			<div class="toolbar">
				${tools.map((g) => html`<div class="group">${g.map((t) => this.tool(t))}</div>`)}
				<div class="find">Buscar</div>
			</div>
			<div class="main">
				<div class="side">
					<div class="tabs">
						<div class="tab active">Navegación</div>
						<div class="tab">Smart views</div>
						<div class="tab">Colisiones</div>
						<div class="tab">Incidencias</div>
					</div>
					<div class="connection">
						<svg width="17" height="14" viewBox="0 0 17 14" fill="none" stroke="#666" stroke-width="1.200"><path d="M4 12q-3 0-3-3 0-2.500 3-3 1-4 4.500-4T13 6q3 0 3 3t-3 3z" /></svg>
						<span>Sin conexión</span>
						<svg class="mode active" viewBox="0 0 24 25" fill="none" stroke=${G}><path d="M5.500 6v12.500H16M5.500 6.500H8M5.500 12.500H11" /><path d="M7.500 5.500h2.500v2.500H7.500zM11.500 11.500h2.500v2.500h-2.500zM16.500 16.500h2.500v2.500h-2.500z" stroke=${B} /></svg>
						<svg class="mode" viewBox="0 0 24 25" fill="none" stroke=${G}><path d="M5.500 5.500h2.500v2.500H5.500zM5.500 11h2.500v2.500H5.500zM5.500 16.500h2.500v2.500H5.500z" stroke=${B} /><path d="M11 11h2.500v2.500H11zM11 16.500h2.500v2.500H11zM16.500 16.500h2.500v2.500h-2.500z" /></svg>
					</div>
					<div class="tree">${tree.map((n) => this.node(n))}</div>
					<div class="site">Site</div>
					<div class="tabs props">
						<div class="tab active">Summary</div>
						<div class="tab">Location</div>
						<div class="tab more"><svg width="8" height="9" viewBox="0 0 8 9" fill="none" stroke="#111" stroke-width="1.800"><path d="M2 1l4 3.500L2 8" /></svg></div>
					</div>
					<div class="sheet">
						<div class="table">
							<div class="row head"><div>Propie...</div><div>Valor</div></div>
							${properties.map(([k, v]) => html`<div class="row ${k.startsWith('Land') ? 'picked' : ''}"><div>${k}</div><div>${v}</div></div>`)}
						</div>
						<div class="scroll">
							<svg width="14" height="14" viewBox="0 0 14 14"><path d="M3.500 9h7L7 5.500z" fill="#555" /></svg>
							<div class="thumb"></div>
							<svg width="14" height="17" viewBox="0 0 14 17"><path d="M3.500 7h7L7 10.500z" fill="#555" /></svg>
						</div>
					</div>
				</div>
				<model-view></model-view>
			</div>
			<div class="status">
				<div class="lamp"></div>
				<a>Obtener Pro...</a>
				<div class="count">Mi vista: 0&nbsp; Seleccionado: 1</div>
			</div>
			<task-bar></task-bar>
			<svg class="static" width="5" height="667">
				<defs>
					<pattern id="noise" width="5" height="19" patternUnits="userSpaceOnUse">
						<rect width="5" height="19" fill="#f4f4f6" />
						<path d="M1 1h2v2H1zM3 5h2v1H3zM1 8h1v2H1zM3 11h1v2H3zM1 14h2v1H1z" fill="#45455a" />
						<path d="M3 2h1v2H3zM2 9h2v1H2zM1 16h2v2H1zM0 4h1v1H0zM4 13h1v1H4z" fill="#5b9a62" />
						<path d="M2 6h1v1H2zM3 15h2v1H3zM0 11h1v1H0z" fill="#8672c2" />
					</pattern>
				</defs>
				<rect width="5" height="667" fill="url(#noise)" />
			</svg>
		`
	}
}
